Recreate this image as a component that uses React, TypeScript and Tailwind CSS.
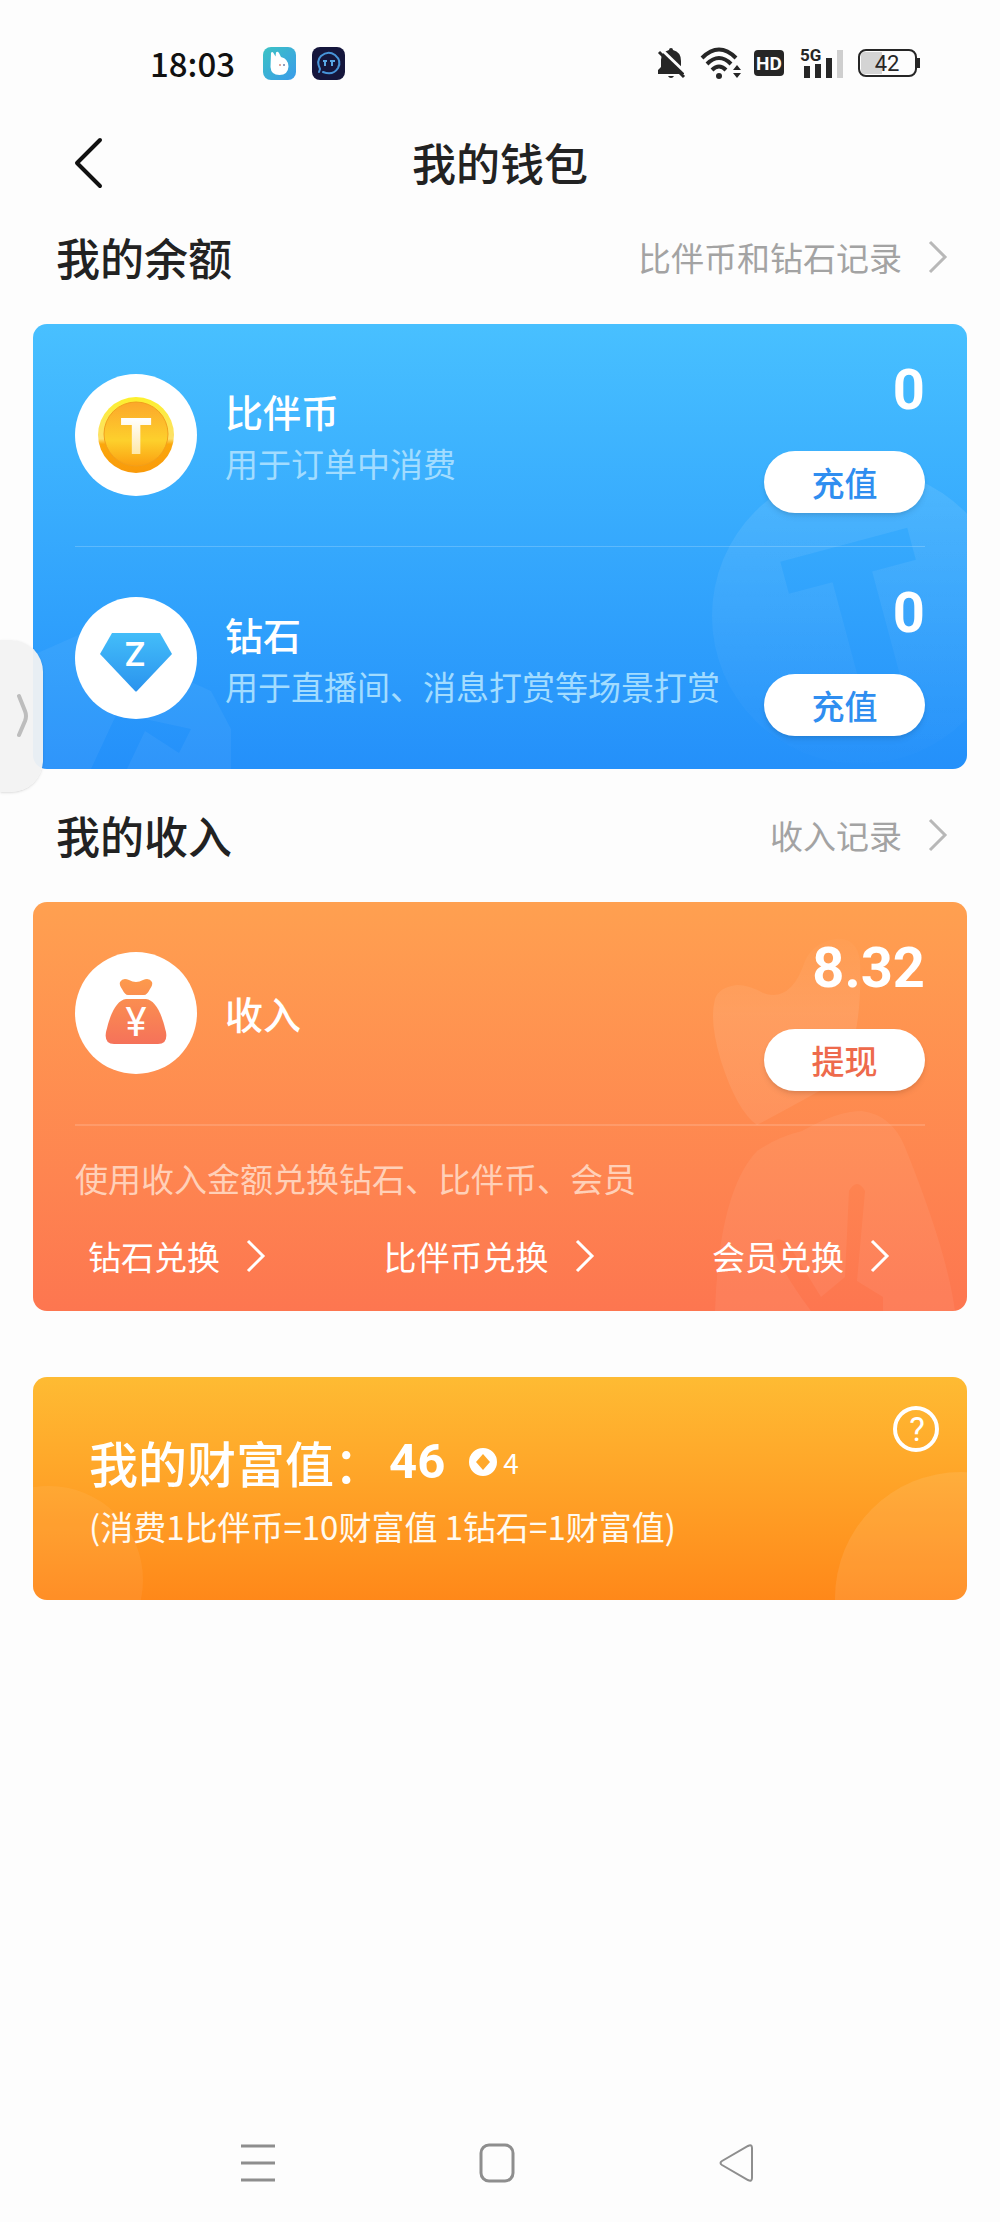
import type { ReactNode } from "react";

const Chevron = ({ className }: { className?: string }) => (
  <svg width="20" height="34" viewBox="0 0 20 34" fill="none" className={className} aria-hidden="true">
    <path d="M2 2 L17 17 L2 32" stroke="currentColor" strokeWidth="3" />
  </svg>
);

const CoinIcon = () => (
  <svg width="78" height="78" viewBox="0 0 78 78" aria-hidden="true">
    <defs>
      <linearGradient id="coinRim" x1="0" y1="0" x2="0" y2="1">
        <stop offset="0" stopColor="#fdf02c" />
        <stop offset="0.55" stopColor="#fde06a" />
        <stop offset="0.62" stopColor="#fba70c" />
        <stop offset="1" stopColor="#f99a0a" />
      </linearGradient>
      <linearGradient id="coinFace" x1="0" y1="0" x2="0" y2="1">
        <stop offset="0" stopColor="#fca72b" />
        <stop offset="0.6" stopColor="#fdd02c" />
        <stop offset="1" stopColor="#fb9f10" />
      </linearGradient>
      <linearGradient id="coinLetter" x1="0" y1="0" x2="0" y2="1">
        <stop offset="0.2" stopColor="#fff" />
        <stop offset="1" stopColor="#fee08a" />
      </linearGradient>
    </defs>
    <circle cx="39" cy="39" r="38" fill="url(#coinRim)" />
    <circle cx="39" cy="38" r="32" fill="url(#coinFace)" stroke="#f2a01c" strokeWidth="1" />
    <text x="39" y="58" textAnchor="middle" fontSize="49" fontWeight="800" fontFamily="Inter, sans-serif" fill="url(#coinLetter)">
      T
    </text>
  </svg>
);

const DiamondIcon = () => (
  <svg width="78" height="78" viewBox="0 0 78 78" aria-hidden="true">
    <defs>
      <linearGradient id="gem" x1="0" y1="0" x2="0" y2="1">
        <stop offset="0" stopColor="#43bdf9" />
        <stop offset="1" stopColor="#2a93ee" />
      </linearGradient>
    </defs>
    <path d="M15 14 H63 L75 35 L40 72 Q39 73 38 72 L3 35 Z" fill="url(#gem)" />
    <text x="38" y="47" textAnchor="middle" fontSize="33" fontWeight="600" fontFamily="Inter, sans-serif" fill="#fff">
      Z
    </text>
  </svg>
);

const MoneyBagIcon = () => (
  <svg width="78" height="78" viewBox="0 0 78 78" aria-hidden="true">
    <defs>
      <linearGradient id="bag" gradientUnits="userSpaceOnUse" x1="0" y1="5" x2="0" y2="70">
        <stop offset="0" stopColor="#fd9a4c" />
        <stop offset="1" stopColor="#f5725a" />
      </linearGradient>
    </defs>
    <path
      d="M23 8 Q26 3 32 6 Q39 10 46 6 Q52 3 55 8 Q56 11 53 15 Q50 21 47 21 H31 Q28 21 25 15 Q22 11 23 8 Z"
      fill="url(#bag)"
    />
    <path d="M29 25 H49 Q62 27 69 58 Q71 70 61 70 H17 Q7 70 9 58 Q16 27 29 25 Z" fill="url(#bag)" />
    <text x="39" y="62" textAnchor="middle" fontSize="40" fontFamily="Roboto, sans-serif" fill="#fff">
      ¥
    </text>
  </svg>
);

const BalanceArt = () => (
  <>
    <svg className="absolute bottom-0 left-0" width="210" height="140" viewBox="0 0 210 140" aria-hidden="true">
      <mask id="gemCut">
        <rect width="210" height="140" fill="#fff" />
        <path d="M58 140 L84 84 L158 100 L146 124 L112 102 L94 140 Z" fill="#000" />
      </mask>
      <path d="M0 26 L50 4 L178 62 L198 100 V140 H0 Z" fill="#fff" fillOpacity="0.05" mask="url(#gemCut)" />
    </svg>
    <svg className="absolute right-0 bottom-0" width="260" height="310" viewBox="0 0 260 310" aria-hidden="true">
      <defs>
        <linearGradient id="discFade" x1="0" y1="0" x2="0" y2="1">
          <stop offset="0" stopColor="#fff" stopOpacity="0.1" />
          <stop offset="1" stopColor="#fff" stopOpacity="0.01" />
        </linearGradient>
      </defs>
      <mask id="coinCut">
        <rect width="260" height="310" fill="#fff" />
        <text
          x="0"
          y="0"
          textAnchor="middle"
          fontSize="208"
          fontWeight="900"
          fontFamily="Inter, sans-serif"
          transform="translate(176 232) rotate(-15)"
          fill="#000"
        >
          T
        </text>
      </mask>
      <circle cx="153" cy="157" r="148" fill="url(#discFade)" mask="url(#coinCut)" />
    </svg>
  </>
);

const IncomeArt = () => (
  <svg className="absolute right-0 bottom-0" width="260" height="380" viewBox="0 0 260 380" aria-hidden="true">
    <defs>
      <linearGradient id="knotFade" x1="0" y1="0" x2="0" y2="1">
        <stop offset="0" stopColor="#fff" stopOpacity="0.02" />
        <stop offset="0.4" stopColor="#fff" stopOpacity="0.09" />
        <stop offset="1" stopColor="#fff" stopOpacity="0.07" />
      </linearGradient>
    </defs>
    <mask id="bagCut">
      <rect width="260" height="380" fill="#fff" />
      <path d="M64 312 Q72 304 82 314 L114 366 L138 346 L142 260 Q150 246 158 260 L150 350 L176 366 V380 H104 Q74 340 64 312 Z" fill="#000" />
    </mask>
    <path
      d="M8 68 Q12 56 30 54 Q42 54 56 62 Q72 68 84 56 Q92 48 98 30 Q106 12 128 8 Q150 6 153 30 Q156 110 130 150 Q95 170 50 194 Q30 180 14 130 Q2 90 8 68 Z"
      fill="url(#knotFade)"
    />
    <path
      d="M8 380 Q12 260 50 220 Q70 206 95 200 Q130 180 155 180 Q185 184 198 216 Q240 320 248 380 Z"
      fill="#fff"
      fillOpacity="0.06"
      mask="url(#bagCut)"
    />
  </svg>
);

const StatusBar = () => (
  <div className="flex h-[126px] items-center justify-between pr-20 pl-[150px]">
    <div className="flex items-center">
      <span className="text-[33px] leading-10 font-medium text-[#111]">18:03</span>
      <svg className="ml-7" width="33" height="33" viewBox="0 0 33 33" aria-hidden="true">
        <defs>
          <linearGradient id="appOne" x1="0" y1="0" x2="1" y2="1">
            <stop offset="0" stopColor="#3cc3c4" />
            <stop offset="1" stopColor="#3a9bea" />
          </linearGradient>
        </defs>
        <rect width="33" height="33" rx="8" fill="url(#appOne)" />
        <path
          d="M8 6 Q9 4 10.500 6 L12.500 9.500 L13 5.500 Q14.500 4 16 6 L18 10 Q25.500 12 25.500 19.500 Q25 28 16.500 28 Q8 28 7.500 20 Z"
          fill="#fff"
        />
        <circle cx="17" cy="18" r="1" fill="#d98c7c" />
        <circle cx="21" cy="18" r="1" fill="#6c7fa8" />
      </svg>
      <svg className="ml-4" width="33" height="33" viewBox="0 0 33 33" aria-hidden="true">
        <rect width="33" height="33" rx="8" fill="#15163c" />
        <path
          d="M7 25 L8 22 Q4 14 9 9 Q16 3 23 8 Q30 14 26 21 Q21 29 11 25"
          fill="none"
          stroke="#4794d8"
          strokeWidth="2"
          strokeLinecap="round"
        />
        <path d="M11 14 H15 M18 14 H23 M13 15 V19 M20 15 V19" stroke="#58a6e4" strokeWidth="2" />
      </svg>
    </div>
    <div className="flex items-center gap-3 text-[#262626]">
      <svg width="32" height="34" viewBox="0 0 32 34" aria-hidden="true">
        <path d="M15 2 Q17 2 17 4 Q25 6 25 15 V21 L28 25 V28 H2 V24 L5 21 V14 Q5 6 13 4 Q13 2 15 2 Z" fill="currentColor" />
        <path d="M12 30 H18 Q17 32 15 32 Q13 32 12 30 Z" fill="currentColor" />
        <path d="M5 3 L31 28" stroke="#fdfdfd" strokeWidth="3" />
        <path d="M3 6 L28 31" stroke="currentColor" strokeWidth="3" />
      </svg>
      <svg width="42" height="34" viewBox="0 0 42 34" aria-hidden="true">
        <g fill="none" stroke="currentColor" strokeWidth="4">
          <path d="M2 12 Q19 -5 36 12" />
          <path d="M7 18 Q19 6 31 18" />
          <path d="M12 24 Q19 17 26 24" />
        </g>
        <circle cx="19" cy="30" r="3" fill="currentColor" />
        <path d="M37 19 L41 24 H33 Z M37 32 L41 27 H33 Z" fill="currentColor" />
      </svg>
      <svg width="30" height="28" viewBox="0 0 30 28" aria-hidden="true">
        <rect y="1" width="30" height="26" rx="4" fill="currentColor" />
        <text x="15" y="21" textAnchor="middle" fontSize="19" fontWeight="700" fontFamily="Roboto, sans-serif" fill="#fdfdfd">
          HD
        </text>
      </svg>
      <svg className="ml-1" width="44" height="34" viewBox="0 0 44 34" aria-hidden="true">
        <text x="0" y="15" fontSize="17" fontWeight="700" fontFamily="Roboto, sans-serif" fill="currentColor">
          5G
        </text>
        <path d="M4 20 H10 V32 H4 Z M15 18 H21 V32 H15 Z M26 12 H32 V32 H26 Z" fill="currentColor" />
        <path d="M37 4 H43 V32 H37 Z" fill="#cfcfcf" />
      </svg>
      <svg width="64" height="34" viewBox="0 0 64 34" aria-hidden="true">
        <rect x="3" y="4" width="57" height="26" rx="7" fill="#fdfdfd" />
        <path d="M9 6 H26 V28 H9 Q5 28 5 24 V10 Q5 6 9 6 Z" fill="#d4d4d4" />
        <rect x="3" y="4" width="57" height="26" rx="7" fill="none" stroke="currentColor" strokeWidth="2" />
        <rect x="61" y="12" width="3" height="10" fill="currentColor" />
        <text x="31" y="25" textAnchor="middle" fontSize="22" fontFamily="Roboto, sans-serif" fill="currentColor">
          42
        </text>
      </svg>
    </div>
  </div>
);

interface SectionHeaderProps {
  title: string;
  link: string;
}

const SectionHeader = ({ title, link }: SectionHeaderProps) => (
  <div className="flex items-center justify-between pr-[52px] pb-[37px] pl-14">
    <h2 className="text-[44px] leading-[60px] font-medium text-[#222]">{title}</h2>
    <a href="#" className="flex items-center gap-[26px] text-[33px] leading-[60px] text-[#a3a3a3]">
      {link}
      <Chevron className="text-[#b8b8b8]" />
    </a>
  </div>
);

interface WalletRowProps {
  icon: ReactNode;
  title: string;
  description?: string;
  amount: string;
  action: string;
  actionColor: string;
}

const WalletRow = ({ icon, title, description, amount, action, actionColor }: WalletRowProps) => (
  <div className="flex items-center">
    <div className="flex size-[122px] shrink-0 items-center justify-center rounded-full bg-white">{icon}</div>
    <div className="ml-7 flex-1">
      <h3 className="text-[38px] leading-[56px] font-medium text-white">{title}</h3>
      {description && <p className="text-[33px] leading-[48px] whitespace-nowrap text-[#a2dcff]">{description}</p>}
    </div>
    <div className="flex flex-col items-end gap-[33px] pt-[38px] pb-[33px]">
      <span className="font-[Roboto,sans-serif] text-[56px] leading-[56px] font-bold text-white">{amount}</span>
      <button
        type="button"
        className={`h-[62px] w-[161px] rounded-full bg-white text-[33px] leading-[48px] font-medium shadow-md ${actionColor}`}
      >
        {action}
      </button>
    </div>
  </div>
);

const exchanges = ["钻石兑换", "比伴币兑换", "会员兑换"];

const App = () => {
  return (
    <div className="relative flex min-h-screen flex-col bg-[#fdfdfd] font-['Noto_Sans_CJK_SC',sans-serif]">
      <StatusBar />

      {/* Title bar */}
      <header className="grid h-[72px] grid-cols-3 items-center">
        <button type="button" aria-label="返回" className="ml-[72px] justify-self-start">
          <svg width="32" height="54" viewBox="0 0 32 54" fill="none" aria-hidden="true">
            <path d="M28 5 L5 28 L28 51" stroke="#111" strokeWidth="4" strokeLinecap="round" strokeLinejoin="round" />
          </svg>
        </button>
        <h1 className="text-center text-[44px] leading-[60px] font-medium text-[#222]">我的钱包</h1>
      </header>

      <main>
        {/* Balance */}
        <section className="pt-[29px]">
          <SectionHeader title="我的余额" link="比伴币和钻石记录" />
          <div className="relative mx-[33px] overflow-hidden rounded-[14px] bg-linear-to-b from-[#48c0ff] to-[#2490fa]">
            <BalanceArt />
            <div className="relative px-[42px]">
              <WalletRow
                icon={<CoinIcon />}
                title="比伴币"
                description="用于订单中消费"
                amount="0"
                action="充值"
                actionColor="text-[#2f8ef0]"
              />
              <div className="h-px bg-white/20" />
              <WalletRow
                icon={<DiamondIcon />}
                title="钻石"
                description="用于直播间、消息打赏等场景打赏"
                amount="0"
                action="充值"
                actionColor="text-[#2f8ef0]"
              />
            </div>
          </div>
        </section>

        {/* Income */}
        <section className="pt-9">
          <SectionHeader title="我的收入" link="收入记录" />
          <div className="relative mx-[33px] overflow-hidden rounded-[14px] bg-linear-to-b from-[#ffa050] to-[#fd7650]">
            <IncomeArt />
            <div className="relative px-[42px] pb-[31px]">
              <WalletRow icon={<MoneyBagIcon />} title="收入" amount="8.32" action="提现" actionColor="text-[#ee6a4c]" />
              <div className="h-[2px] bg-white/15" />
              <p className="mt-7 text-[33px] leading-[48px] text-[#ffd0b8]">使用收入金额兑换钻石、比伴币、会员</p>
              <div className="mt-[30px] flex justify-between pr-[35px] pl-[13px]">
                {exchanges.map((label) => (
                  <a key={label} href="#" className="flex items-center gap-[26px] text-[33px] leading-[48px] text-white">
                    {label}
                    <Chevron />
                  </a>
                ))}
              </div>
            </div>
          </div>
        </section>

        {/* Wealth value */}
        <section className="relative mx-[33px] mt-[66px] overflow-hidden rounded-[14px] bg-linear-to-b from-[#febb33] to-[#ff8819] px-14 pt-[49px] pb-[50px] text-white">
          <svg className="absolute bottom-0 left-0" width="130" height="120" viewBox="0 0 130 120" aria-hidden="true">
            <circle cx="16" cy="100" r="94" fill="#fff" fillOpacity="0.06" />
          </svg>
          <svg className="absolute right-0 bottom-0" width="140" height="130" viewBox="0 0 140 130" aria-hidden="true">
            <circle cx="134" cy="128" r="126" fill="#fff" fillOpacity="0.09" />
          </svg>
          <div className="relative flex items-center">
            <h2 className="text-[49px] leading-[72px] font-medium">我的财富值：</h2>
            <span className="ml-[6px] font-[Roboto,sans-serif] text-[49px] leading-[72px] font-bold">46</span>
            <svg className="ml-6" width="28" height="28" viewBox="0 0 28 28" aria-hidden="true">
              <path
                fillRule="evenodd"
                d="M14 0 A14 14 0 1 1 14 28 A14 14 0 1 1 14 0 Z M14 6 L7 14 L14 22 L21 14 Z"
                fill="#fff"
              />
            </svg>
            <span className="ml-[6px] text-[28px] leading-[48px]">4</span>
          </div>
          <p className="relative mt-1 text-[33px] leading-[48px] text-[#fffaf0]">(消费1比伴币=10财富值 1钻石=1财富值)</p>
          <button type="button" aria-label="财富值说明" className="absolute top-[29px] right-7">
            <svg width="46" height="46" viewBox="0 0 46 46" aria-hidden="true">
              <circle cx="23" cy="23" r="21" fill="none" stroke="#fff" strokeWidth="4" />
              <text x="24" y="35" textAnchor="middle" fontSize="33" fontFamily="Roboto, sans-serif" fill="#fff">
                ?
              </text>
            </svg>
          </button>
        </section>
      </main>

      {/* System navigation */}
      <nav className="mt-auto flex h-[120px] items-center justify-around pt-[10px] pr-[144px] pb-[8px] pl-[138px] text-[#8e8e8e]">
        <button type="button" aria-label="最近任务">
          <svg width="40" height="40" viewBox="0 0 40 40" fill="none" aria-hidden="true">
            <path d="M3 3 H37 M3 20 H37 M3 37 H37" stroke="currentColor" strokeWidth="3" />
          </svg>
        </button>
        <button type="button" aria-label="主屏幕">
          <svg width="40" height="40" viewBox="0 0 40 40" fill="none" aria-hidden="true">
            <rect x="4" y="2" width="32" height="36" rx="8" stroke="currentColor" strokeWidth="3" />
          </svg>
        </button>
        <button type="button" aria-label="返回上一页">
          <svg width="40" height="40" viewBox="0 0 40 40" fill="none" aria-hidden="true">
            <path d="M32 3 Q36 1 36 5 V35 Q36 39 32 37 L6 22 Q3 20 6 18 Z" stroke="currentColor" strokeWidth="2" />
          </svg>
        </button>
      </nav>

      {/* Edge handle of the floating side panel */}
      <button
        type="button"
        aria-label="展开侧边栏"
        className="absolute top-[640px] left-0 flex h-[152px] w-[43px] items-center justify-end rounded-r-[32px] bg-[#f2f2f2]/95 pr-[14px] shadow-sm"
      >
        <svg width="12" height="46" viewBox="0 0 12 46" fill="none" aria-hidden="true">
          <path d="M2 3 L8 18 Q10 23 8 28 L2 42" stroke="#bdbdbd" strokeWidth="4" strokeLinecap="round" />
        </svg>
      </button>
    </div>
  );
};

export default App;
